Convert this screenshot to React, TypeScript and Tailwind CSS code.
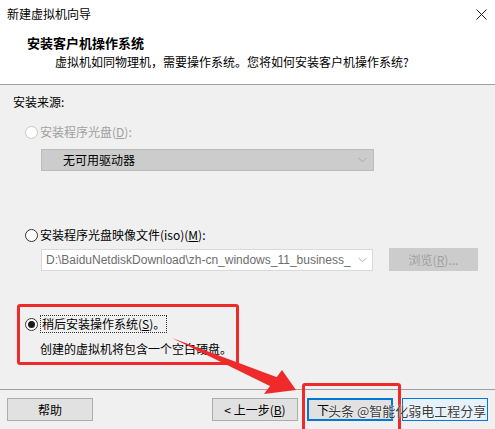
import React from "react";

const font = { fontFamily: '"Noto Sans CJK SC", "Noto Sans", sans-serif' };

type RadioProps = { checked?: boolean; disabled?: boolean };

const Radio = ({ checked, disabled }: RadioProps) => (
  <span
    className={`flex h-[13px] w-[13px] shrink-0 items-center justify-center rounded-full border bg-white ${
      disabled ? "border-[#c8c8c8]" : "border-[#333333]"
    }`}
  >
    {checked && <span className="h-[7px] w-[7px] rounded-full bg-[#1a1a1a]" />}
  </span>
);

const Chevron = ({ color }: { color: string }) => (
  <svg width="9" height="6" viewBox="0 0 9 6" className="shrink-0">
    <path d="M0.5 0.8 L4.5 4.8 L8.5 0.8" fill="none" stroke={color} strokeWidth="1" />
  </svg>
);

const Button = ({
  children,
  variant,
  className = "justify-center",
}: {
  children?: React.ReactNode;
  variant?: "default" | "hover";
  className?: string;
}) => (
  <div
    className={`flex h-[23px] w-[86px] items-center text-[12px] text-black ${className} ${
      variant === "default"
        ? "border-2 border-[#0078d7] bg-[#e1e1e1]"
        : variant === "hover"
        ? "border border-[#0078d7] bg-[#e5f1fb]"
        : "border border-[#adadad] bg-[#e1e1e1]"
    }`}
  >
    {children}
  </div>
);

export default function App() {
  return (
    <div className="relative h-[429px] w-[495px] overflow-hidden bg-[#f0f0f0] text-[12px] leading-[18px]" style={font}>
      {/* title + header */}
      <div className="border-b border-[#a0a0a0] bg-white">
        <div className="flex h-[28px] items-center justify-between pl-[7px] pr-[8px]">
          <span className="text-[12px] text-black">新建虚拟机向导</span>
          <svg width="11" height="11" viewBox="0 0 11 11">
            <path d="M0.5 0.5 L10.5 10.5 M10.5 0.5 L0.5 10.5" stroke="#1a1a1a" strokeWidth="1" />
          </svg>
        </div>
        <div className="pb-[13px] pl-[27px] pt-[6px]">
          <div className="text-[13px] font-bold text-black">安装客户机操作系统</div>
          <div className="mt-px pl-[28px] text-[12px] text-black">虚拟机如同物理机，需要操作系统。您将如何安装客户机操作系统?</div>
        </div>
      </div>

      {/* body */}
      <div className="flex h-[305px] flex-col border-b border-[#a0a0a0] pl-[13px] pt-[8px]">
        <div className="text-black">安装来源:</div>

        <div className="mt-[12px] flex items-center gap-[2px] pl-[12px] text-[#a0a0a0]">
          <Radio disabled />
          <span>
            安装程序光盘(<span className="underline">D</span>):
          </span>
        </div>
        <div className="ml-[28px] mt-[8px] flex h-[22px] w-[333px] items-center justify-between border border-[#bcbcbc] bg-[#cccccc] pl-[21px] pr-[6px]">
          <span className="text-black">无可用驱动器</span>
          <Chevron color="#a8a8a8" />
        </div>

        <div className="mt-[55px] flex items-center gap-[2px] pl-[12px] text-black">
          <Radio />
          <span>
            安装程序光盘映像文件(iso)(<span className="underline">M</span>):
          </span>
        </div>
        <div className="ml-[28px] mt-[4px] flex items-center">
          <div className="flex h-[22px] w-[332px] items-center justify-between border border-[#d9d9d9] bg-white pl-[4px] pr-[5px]">
            <span
              className="whitespace-nowrap text-[#6d6d6d]"
              style={{ fontFamily: '"Liberation Sans", "Noto Sans CJK SC", sans-serif', fontSize: 12 }}
            >
              D:\BaiduNetdiskDownload\zh-cn_windows_11_business_
            </span>
            <Chevron color="#b0b0b0" />
          </div>
          <div className="ml-[16px] flex h-[23px] w-[89px] items-center justify-center border border-[#cccccc] bg-[#cccccc] text-[#a0a0a0]">
            浏览(<span className="underline">R</span>)...
          </div>
        </div>

        <div className="mt-[44px] flex items-center gap-[2px] pl-[12px] text-black">
          <Radio checked />
          <span className="border border-dotted border-[#333333] px-px leading-[16px]">
            稍后安装操作系统(<span className="underline">S</span>)。
          </span>
        </div>
        <div className="mt-[7px] pl-[27px] text-black">创建的虚拟机将包含一个空白硬盘。</div>
      </div>

      {/* buttons */}
      <div className="flex items-center px-[7px] pt-[8px]">
        <Button>帮助</Button>
        <div className="flex-1" />
        <Button>&lt; 上一步(<span className="underline">B</span>)</Button>
        <div className="w-[9px]" />
        <Button variant="default" className="justify-start pl-[8px]">
          下
        </Button>
        <div className="w-[9px]" />
        <Button variant="hover" />
      </div>

      {/* annotations */}
      <div className="absolute left-[17px] top-[304px] h-[61px] w-[222px] rounded-[3px] border-[3px] border-[#ee2a2a]" />
      <div className="absolute left-[302px] top-[383px] h-[52px] w-[99px] rounded-[3px] border-[3px] border-[#ee2a2a]" />
      <svg className="absolute left-0 top-0" width="495" height="429" viewBox="0 0 495 429">
        <path d="M172 338 L279 378 L276 389 Z" fill="#ee2a2a" />
        <path d="M296 390 L264 394 L282 370 Z" fill="#ee2a2a" />
      </svg>
      <div
        className="absolute left-[328px] top-[402px] whitespace-nowrap text-[13px] leading-[18px] text-[#3a3a3a]"
        style={{ textShadow: "0 0 2px #ffffff, 0 0 1px #ffffff" }}
      >
        头条 @智能化弱电工程分享
      </div>
    </div>
  );
}
